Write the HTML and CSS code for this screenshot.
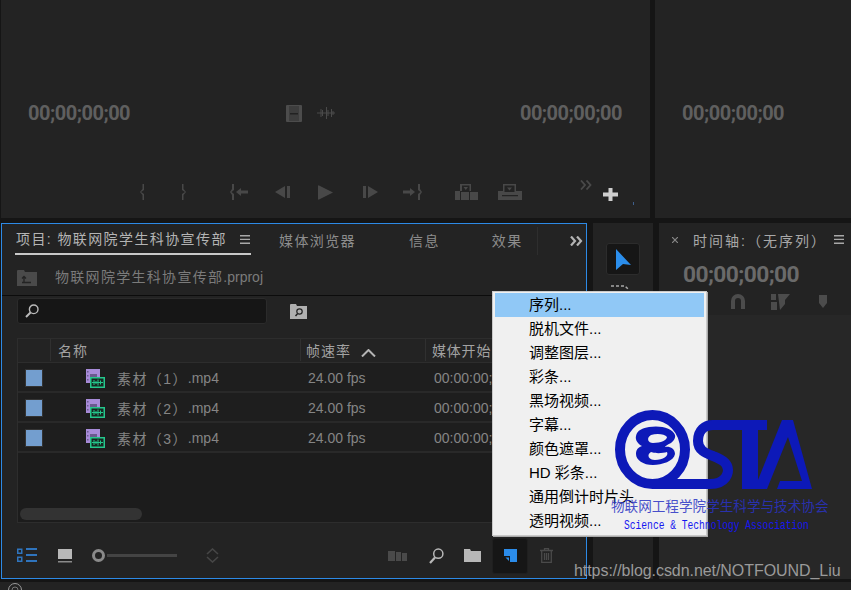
FILE: index.html
```html
<!DOCTYPE html>
<html lang="zh-CN">
<head>
<meta charset="utf-8">
<title>Premiere Pro</title>
<link rel="stylesheet" href="styles.css">
</head>
<body>
<div class="app">
  <div class="row-top">
    <section class="panel monitor source">
      <div class="tc-row">
        <span class="tc">00;00;00;00</span>
        <span class="tc-icons">
          <svg class="ic-film" width="16" height="17" viewBox="0 0 16 17"><path fill="#4c4c4c" d="M0 1q0-1 1-1h14q1 0 1 1v15q0 1-1 1H1q-1 0-1-1z"/><path fill="#3d3d3d" d="M3 1h10v15H3z"/><path fill="#222" d="M4 8h8v1.500H4z"/></svg>
          <svg class="ic-wave" width="18" height="12" viewBox="0 0 18 12"><path fill="none" stroke="#4a4a4a" d="M0 6h18M4 2v8M5.500 3v6M9.500 0v12M11 3v6M14.500 2v8M16 4v4"/></svg>
        </span>
        <span class="tc">00;00;00;00</span>
      </div>
      <div class="transport">
        <svg class="t t1" width="5" height="16" viewBox="0 0 5 16"><path fill="#484848" d="M2.500 0H4v6L1 8l3 2v6H2.500v-5L0 8l2.500-3z"/></svg>
        <svg class="t t2" width="5" height="16" viewBox="0 0 5 16"><path fill="#484848" d="M1 0h1.500v5L5 8l-2.500 3v5H1v-6l3-2-3-2z"/></svg>
        <svg class="t t3" width="18" height="16" viewBox="0 0 18 16"><path fill="#484848" d="M2 0h2v6L1.500 8 4 10v6H2v-5L0 8l2-3zM6 8l5-4v2.500h7v3h-7V12z"/></svg>
        <svg class="t t4" width="15" height="12" viewBox="0 0 15 12"><path fill="#484848" d="M0 6l10-6v12zM12 0h3v12h-3z"/></svg>
        <svg class="t t5" width="15" height="15" viewBox="0 0 15 15"><path fill="#484848" d="M0 1q0-1 1-.5l14 7-14 7q-1 .5-1-.5z"/></svg>
        <svg class="t t6" width="15" height="12" viewBox="0 0 15 12"><path fill="#484848" d="M0 0h3v12H0zM5 0l10 6-10 6z"/></svg>
        <svg class="t t7" width="19" height="16" viewBox="0 0 19 16"><path fill="#484848" d="M0 6.500h7V4l5 4-5 4V9.500H0zM15 0h2v5l2 3-2 3v5h-2v-6l2.500-2L15 6z"/></svg>
        <svg class="t t8" width="23" height="16" viewBox="0 0 23 16"><path fill="#484848" d="M0 7h5V0h11v7H5v9H0zM6 8h8v8H6zM15 8h8v8h-8z"/><path fill="#232323" d="M7 1.500h7.500V7H7zM14 7h1v9h-1z"/><path fill="#484848" d="M8.500 3h4.500l-2.200 3zM17.500 9.500l3.500 2.500-3.500 2.500z"/></svg>
        <svg class="t t9" width="24" height="16" viewBox="0 0 24 16"><path fill="#484848" d="M5 0h13v7h6v9H0V7h5z"/><path fill="#232323" d="M6.500 1.500h10V8h-10zM4 11h16v1.300H4z"/><path fill="#484848" d="M9 3.500h5l-2.500 3z"/></svg>
        <svg class="t t10" width="12" height="10" viewBox="0 0 12 10"><path fill="none" stroke="#4a4a4a" stroke-width="1.800" d="M1 .5L5 5 1 9.500M6.500 .5L10.500 5l-4 4.500"/></svg>
        <svg class="t t11" width="15" height="13" viewBox="0 0 15 13"><path fill="#cfcfcf" d="M5.500 0h4v4.500H15v4H9.500V13h-4V8.500H0v-4h5.500z"/></svg>
        <span class="t12"></span>
      </div>
    </section>
    <section class="panel monitor program">
      <div class="tc-row"><span class="tc">00;00;00;00</span></div>
    </section>
  </div>

  <div class="row-main">
    <section class="panel project">
      <div class="tabs">
        <div class="tab tab-active">项目: 物联网院学生科协宣传部
          <svg class="burger" width="10" height="9" viewBox="0 0 10 9"><path fill="#a8a8a8" d="M0 0h10v1.400H0zM0 3.700h10v1.400H0zM0 7.500h10v1.400H0z"/></svg>
        </div>
        <div class="tab tab-media">媒体浏览器</div>
        <div class="tab tab-info">信息</div>
        <div class="tab tab-fx">效果</div>
        <div class="tab-sep"></div>
        <svg class="more" width="13" height="10" viewBox="0 0 13 10"><path fill="none" stroke="#b4b4b4" stroke-width="2.200" d="M1 .5L5 5 1 9.500M7 .5L11 5 7 9.500"/></svg>
      </div>
      <div class="path-row">
        <svg width="20" height="16" viewBox="0 0 20 16"><path fill="#4a4a4a" d="M0 1q0-1 1-1h6l1 2h12v14H0z"/><path fill="none" stroke="#232323" stroke-width="1.300" d="M5 12.500h9M7 12.500V7M5 8.500L7 6.500l2 2"/></svg>
        <span class="path-name">物联网院学生科协宣传部<span class="latin">.prproj</span></span>
      </div>
      <div class="search-row">
        <div class="search-box">
          <svg width="14" height="14" viewBox="0 0 14 14"><circle cx="8.700" cy="5.300" r="4.300" fill="none" stroke="#bbb" stroke-width="1.400"/><path stroke="#bbb" stroke-width="2" d="M5.500 8.500L1 13"/></svg>
        </div>
        <svg class="find-bin" width="17" height="15" viewBox="0 0 17 15"><path fill="#b0b0b0" d="M0 1q0-1 1-1h5l1 2h10v13H0z"/><circle cx="9.500" cy="7.500" r="2.700" fill="none" stroke="#222" stroke-width="1.200"/><path stroke="#222" stroke-width="1.500" d="M7.500 9.700L5.500 12"/></svg>
      </div>
      <div class="table">
        <div class="thead">
          <div class="c-label"></div>
          <div class="c-name">名称</div>
          <div class="c-fps">帧速率
            <svg class="sort" width="15" height="8" viewBox="0 0 15 8"><path fill="none" stroke="#b4b4b4" stroke-width="2" d="M1 7.500L7.500 1 14 7.500"/></svg>
          </div>
          <div class="c-start">媒体开始</div>
        </div>
        <div class="tr">
          <div class="c-label"><span class="swatch"></span></div>
          <div class="c-name file">
            <svg class="clip" width="19" height="19" viewBox="0 0 19 19"><path fill="#a78bd8" d="M0 0h14v14H0z"/><path fill="#6b5b8f" d="M4 5h7v5H4zM1 2h1.500v1.500H1zM1 6h1.500v1.500H1zM1 10h1.500v1.500H1z"/><path fill="#162822" stroke="#24c78c" stroke-width="1.500" d="M4.750 8.750h13.500v9.500H4.750z"/><path fill="none" stroke="#24c78c" d="M6 13.500h11M8 11v5M10 12v3M12 10.500v6M14.500 11.500v4"/></svg>
            <span class="cjk">素材（1）</span>.mp4
          </div>
          <div class="c-fps val">24.00 fps</div>
          <div class="c-start val">00:00:00;00</div>
        </div>
        <div class="tr">
          <div class="c-label"><span class="swatch"></span></div>
          <div class="c-name file">
            <svg class="clip" width="19" height="19" viewBox="0 0 19 19"><path fill="#a78bd8" d="M0 0h14v14H0z"/><path fill="#6b5b8f" d="M4 5h7v5H4zM1 2h1.500v1.500H1zM1 6h1.500v1.500H1zM1 10h1.500v1.500H1z"/><path fill="#162822" stroke="#24c78c" stroke-width="1.500" d="M4.750 8.750h13.500v9.500H4.750z"/><path fill="none" stroke="#24c78c" d="M6 13.500h11M8 11v5M10 12v3M12 10.500v6M14.500 11.500v4"/></svg>
            <span class="cjk">素材（2）</span>.mp4
          </div>
          <div class="c-fps val">24.00 fps</div>
          <div class="c-start val">00:00:00;00</div>
        </div>
        <div class="tr">
          <div class="c-label"><span class="swatch"></span></div>
          <div class="c-name file">
            <svg class="clip" width="19" height="19" viewBox="0 0 19 19"><path fill="#a78bd8" d="M0 0h14v14H0z"/><path fill="#6b5b8f" d="M4 5h7v5H4zM1 2h1.500v1.500H1zM1 6h1.500v1.500H1zM1 10h1.500v1.500H1z"/><path fill="#162822" stroke="#24c78c" stroke-width="1.500" d="M4.750 8.750h13.500v9.500H4.750z"/><path fill="none" stroke="#24c78c" d="M6 13.500h11M8 11v5M10 12v3M12 10.500v6M14.500 11.500v4"/></svg>
            <span class="cjk">素材（3）</span>.mp4
          </div>
          <div class="c-fps val">24.00 fps</div>
          <div class="c-start val">00:00:00;00</div>
        </div>
        <div class="scroll-area"><div class="scroll-thumb"></div></div>
      </div>
      <div class="foot">
        <svg class="f-list" width="20" height="15" viewBox="0 0 20 15"><path fill="none" stroke="#2f74bd" stroke-width="1.500" d="M.75 1.250h4v4h-4zM.75 9.250h4v4h-4z"/><path fill="#2f74bd" d="M9 0h11v2H9zM9 6h11v2H9zM9 12h11v2H9z"/></svg>
        <svg class="f-thumb" width="14" height="14" viewBox="0 0 14 14"><path fill="#b8b8b8" d="M0 0h14v10H0z"/><path fill="#8a8a8a" d="M0 12h14v1.500H0z"/></svg>
        <span class="slider"><span class="knob"></span><span class="track"></span></span>
        <svg class="f-sort" width="13" height="15" viewBox="0 0 13 15"><path fill="none" stroke="#464646" stroke-width="1.600" d="M1 6l5.500-5L12 6M1 9l5.500 5L12 9"/></svg>
        <svg class="f-bins" width="19" height="10" viewBox="0 0 19 10"><path fill="#4a4a4a" d="M0 0h7v10H0zM8 1h5v9H8zM14 2h5v8h-5z"/></svg>
        <svg class="f-find" width="15" height="16" viewBox="0 0 15 16"><circle cx="9.300" cy="5.700" r="4.600" fill="none" stroke="#b8b8b8" stroke-width="1.500"/><path stroke="#b8b8b8" stroke-width="2.200" d="M6 9.500L1 15"/></svg>
        <svg class="f-bin" width="17" height="13" viewBox="0 0 17 13"><path fill="#b8b8b8" d="M0 0h6l1 2h10v11H0z"/></svg>
        <div class="f-new">
          <svg width="13" height="13" viewBox="0 0 13 13"><path fill="#2b8cea" d="M0 0H13V13H6V7H0z"/><path fill="#2b8cea" d="M1.500 8.500H5V12z"/></svg>
        </div>
        <svg class="f-trash" width="13" height="15" viewBox="0 0 13 15"><path fill="none" stroke="#4a4a4a" stroke-width="1.300" d="M0 2.500h13M4.500 2.500V.7h4v1.800M1.700 2.500v11.800h9.600V2.500M4.500 5v7M6.500 5v7M8.500 5v7"/></svg>
      </div>
    </section>

    <section class="panel tools">
      <div class="tool-btn">
        <svg width="15" height="21" viewBox="0 0 15 21"><path fill="#2b8eec" d="M0 0l15 16-8-1-7 6z"/></svg>
      </div>
      <svg class="tool-track" width="18" height="5" viewBox="0 0 18 5"><path fill="none" stroke="#a8a8a8" stroke-width="1.500" stroke-dasharray="3 2" d="M0 1h14l3 3"/></svg>
    </section>

    <section class="panel timeline">
      <div class="tl-head">
        <svg width="6" height="6" viewBox="0 0 6 6"><path stroke="#888" stroke-width="1.200" d="M0 0l6 6M6 0L0 6"/></svg>
        <span class="tl-title">时间轴:（无序列）</span>
        <svg class="burger" width="10" height="9" viewBox="0 0 10 9"><path fill="#a8a8a8" d="M0 0h10v1.400H0zM0 3.700h10v1.400H0zM0 7.500h10v1.400H0z"/></svg>
      </div>
      <div class="tl-tc">00;00;00;00</div>
      <div class="tl-tools">
        <svg class="m1" width="14" height="15" viewBox="0 0 14 15"><path fill="#4c4c4c" d="M0 15V7a7 7 0 0 1 14 0v8h-4V7a3 3 0 0 0-6 0v8z"/></svg>
        <svg class="m2" width="19" height="16" viewBox="0 0 19 16"><path fill="#4c4c4c" d="M0 0h5v6H0zM0 8h6v8H0zM7 0h12l-5 6 0 4-5 6z"/></svg>
        <svg class="m3" width="8" height="13" viewBox="0 0 8 13"><path fill="#4c4c4c" d="M0 0h8v8l-4 5-4-5z"/></svg>
      </div>
      <div class="tl-body"></div>
    </section>
  </div>
  <div class="row-bottom">
    <svg width="16" height="8" viewBox="0 0 16 8"><circle cx="8" cy="8" r="6.500" fill="none" stroke="#999"/><circle cx="8" cy="8" r="3" fill="none" stroke="#777"/></svg>
  </div>

  <div class="menu">
    <div class="menu-item on">序列...</div>
    <div class="menu-item">脱机文件...</div>
    <div class="menu-item">调整图层...</div>
    <div class="menu-item">彩条...</div>
    <div class="menu-item">黑场视频...</div>
    <div class="menu-item">字幕...</div>
    <div class="menu-item">颜色遮罩...</div>
    <div class="menu-item">HD 彩条...</div>
    <div class="menu-item">通用倒计时片头</div>
    <div class="menu-item">透明视频...</div>
  </div>

  <div class="logo">
    <svg class="logo-mark" width="200" height="82" viewBox="0 0 200 82">
      <ellipse cx="37.500" cy="39.500" rx="32.500" ry="34.500" fill="none" stroke="#0d19b8" stroke-width="10"/>
      <path fill="none" stroke="#0d19b8" stroke-width="10" d="M37 74H95C112 74 113 62 113 60C113 52 105 49 98 46C90 43 83 40 83 31C83 20 90 15 98 15H152"/>
      <path fill="#0d19b8" d="M127 15h16v64h-16z"/>
      <path fill="#0d19b8" fill-rule="evenodd" d="M34 17C45 15 58 18 60 25C61 29 57 32 56 33C52 35 50 36 50 37C54 36 60 38 60 44C59 51 47 55 38 55C28 55 21 50 21 44C21 39 24 37 27 36C23 34 20 30 21 26C22 20 28 18 34 17ZM36 25C42 23 50 24 52 27C52 30 46 33 38 33C33 33 31 28 36 25ZM36 42C42 44 48 43 52 42C54 46 48 50 40 50C34 50 31 45 36 42Z"/>
      <path fill="#0d19b8" d="M167 10H178L197 79H162L165 71H187L173 27L152 79H143V70Z"/>
    </svg>
    <div class="logo-cn">物联网工程学院学生科学与技术协会</div>
    <div class="logo-en">Science &amp; Technology Association</div>
  </div>
  <div class="csdn">https://blog.csdn.net/NOTFOUND_Liu</div>
</div>
</body>
</html>
```
FILE: styles.css
```css
* { box-sizing: border-box; }
html, body { margin: 0; padding: 0; background: #151515; }
body { font-family: "Liberation Sans", "Noto Sans CJK SC", sans-serif; font-size: 14px; overflow: hidden; }
svg { display: block; flex: none; }
.app { position: relative; width: 851px; height: 590px; overflow: hidden; padding-left: 1px; }
.panel { background: #232323; }

.row-top { display: flex; height: 218px; gap: 5px; }
.monitor { display: flex; flex-direction: column; padding-top: 100px; }
.source { width: 649px; }
.program { flex: 1; }
.tc-row { display: flex; justify-content: space-between; align-items: center; height: 26px; padding: 0 28px 0 27px; }
.tc { font-family: Roboto, "Liberation Sans", sans-serif; font-size: 20px; font-weight: 700; color: #5f5f5f; white-space: nowrap; letter-spacing: -.5px; }
.tc-icons { display: flex; align-items: center; gap: 15px; margin-right: 30px; }
.transport { display: flex; align-items: center; height: 20px; margin-top: 56px; }
.t1 { margin-left: 139px; }
.t2 { margin-left: 36px; }
.t3 { margin-left: 44px; }
.t4 { margin-left: 27px; }
.t5 { margin-left: 28px; }
.t6 { margin-left: 30px; }
.t7 { margin-left: 25px; }
.t8 { margin-left: 33px; }
.t9 { margin-left: 20px; }
.t10 { margin-left: 58px; margin-top: -14px; }
.t11 { margin-left: 11px; margin-top: 5px; }
.t12 { width: 1px; height: 3px; margin-left: 15px; margin-top: 22px; background: #3e5f8c; }

.row-main { display: flex; height: 356px; margin-top: 5px; gap: 6px; }
.project { width: 586px; border: 1px solid #2d8ae6; display: flex; flex-direction: column; padding: 0; }
.tabs { display: flex; align-items: center; height: 33px; color: #8d8d8d; letter-spacing: 1.400px; padding-left: 13px; flex: none; }
.tab { white-space: nowrap; line-height: 20px; }
.tab-active { display: flex; align-items: center; height: 30px; margin-top: -1px; width: 236px; padding-left: 1px; color: #b4b4b4; border-bottom: 2px solid #c8c8c8; position: relative; }
.tab-active .burger { margin-left: auto; margin-right: 1px; }
.tab-media { margin-left: 28px; }
.tab-info { margin-left: 53px; }
.tab-fx { margin-left: 52px; }
.tab-sep { width: 1px; height: 28px; background: #2e2e2e; margin-left: 14px; }
.more { margin-left: 32px; }

.path-row { display: flex; align-items: center; height: 39px; padding: 0 0 0 15px; border-bottom: 1px solid #0c0c0c; flex: none; }
.path-name { margin-left: 18px; color: #7b7b7b; letter-spacing: 1.300px; white-space: nowrap; }
.path-row svg { margin-top: 4px; }
.latin { letter-spacing: 0; }

.search-row { display: flex; align-items: center; height: 30px; padding: 0 0 0 15px; flex: none; margin-bottom: 12px; }
.search-box { width: 250px; height: 26px; background: #161616; border: 1px solid #2b2b2b; border-radius: 3px; display: flex; align-items: center; padding-left: 7px; }
.find-bin { margin-left: 23px; }

.table { margin-left: 15px; width: 563px; height: 185px; border: 1px solid #2d2d2d; background: #1c1c1c; display: flex; flex-direction: column; flex: none; }
.thead, .tr { display: grid; grid-template-columns: 32px 250px 125px 1fr; align-items: center; flex: none; }
.thead { height: 24px; padding-bottom: 1px; background: #232323; color: #a2a2a2; border-bottom: 1px solid #2d2d2d; letter-spacing: 1px; }
.thead > div { height: 100%; display: flex; align-items: center; border-left: 1px solid #303030; padding-left: 7px; white-space: nowrap; }
.thead > div:first-child { border-left: 0; }
.thead .c-fps { padding-left: 5px; }
.thead .c-start { padding-left: 6px; letter-spacing: .8px; }
.sort { margin-left: 10px; margin-top: 6px; }
.tr { height: 30px; padding-top: 2px; background: #1e1e1e; border-bottom: 2px solid #292929; color: #858585; }
.c-label { display: flex; align-items: center; justify-content: center; }
.swatch { width: 18px; height: 18px; background: #739ecf; border: 1px solid #333; }
.file { display: flex; align-items: center; padding-left: 36px; white-space: nowrap; }
.clip { margin-right: 12px; }
.cjk { letter-spacing: 1.400px; }
.val { padding-left: 8px; font-size: 14px; white-space: nowrap; }
.c-start.val { padding-left: 9px; }
.scroll-area { flex: 1; display: flex; align-items: flex-end; padding: 0 0 2px 2px; }
.scroll-thumb { width: 122px; height: 12px; border-radius: 6px; background: #333; }

.foot { display: flex; align-items: center; flex: 1; padding-left: 15px; padding-top: 10px; }
.f-thumb { margin-left: 21px; }
.slider { display: flex; align-items: center; margin-left: 20px; }
.knob { width: 13px; height: 13px; border: 3px solid #8a8a8a; border-radius: 50%; }
.track { width: 70px; height: 3px; background: #444; margin-left: 2px; }
.f-sort { margin-left: 29px; }
.f-bins { margin-left: 169px; }
.f-find { margin-left: 22px; }
.f-bin { margin-left: 20px; }
.f-new { width: 36px; height: 36px; margin-left: 11px; background: #161616; border: 1px solid #1f1f1f; border-radius: 3px; display: flex; align-items: center; justify-content: center; }
.f-trash { margin-left: 12px; }

.tools { width: 60px; display: flex; flex-direction: column; align-items: center; padding: 20px 0 0 0; }
.tool-btn { width: 34px; height: 32px; background: #161616; border: 1px solid #2c2c2c; border-radius: 3px; display: flex; align-items: center; justify-content: center; }
.tool-track { margin-top: 10px; margin-left: -6px; }

.timeline { flex: 1; display: flex; flex-direction: column; }
.tl-head { display: flex; align-items: center; height: 33px; padding-left: 13px; color: #a8a8a8; flex: none; }
.tl-title { margin-left: 15px; letter-spacing: 2px; white-space: nowrap; }
.tl-head .burger { margin-left: 7px; }
.tl-tc { font-family: Roboto, "Liberation Sans", sans-serif; font-size: 22.800px; font-weight: 700; color: #6a6a6a; padding-left: 24px; height: 32px; line-height: 38px; letter-spacing: -.6px; flex: none; }
.tl-tools { display: flex; align-items: center; height: 27px; flex: none; }
.m1 { margin-left: 72px; }
.m2 { margin-left: 26px; }
.m3 { margin-left: 29px; }
.tl-body { flex: 1; background: #272727; }

.row-bottom { height: 8px; margin-top: 3px; margin-left: -1px; background: #232323; padding-left: 7px; }

.menu { position: absolute; left: 492px; top: 291px; width: 215px; height: 245px; background: #f0f0f0; border: 1px solid #c9c9c9; padding: 1px 2px; box-shadow: 1px 1px 0 #aaa; }
.menu-item { height: 24px; line-height: 24px; padding-left: 34px; color: #000; white-space: nowrap; font-size: 15px; }
.menu-item.on { background: #90c8f6; }

.logo { position: absolute; left: 611px; top: 410px; width: 220px; }
.logo-mark { margin-left: 4px; }
.logo-cn { position: absolute; left: 0; top: 88px; font-size: 13.600px; line-height: 18px; color: #2a33c4; white-space: nowrap; opacity: .85; }
.logo-en { position: absolute; left: 13px; top: 108px; font-family: "Liberation Mono", monospace; font-size: 9.650px; line-height: 12px; color: #1616f0; white-space: nowrap; transform: scaleY(1.350); transform-origin: left top; }
.csdn { position: absolute; left: 574px; top: 562px; font-size: 16px; letter-spacing: -.06px; line-height: 18px; color: #9a9a9a; white-space: nowrap; }
```
